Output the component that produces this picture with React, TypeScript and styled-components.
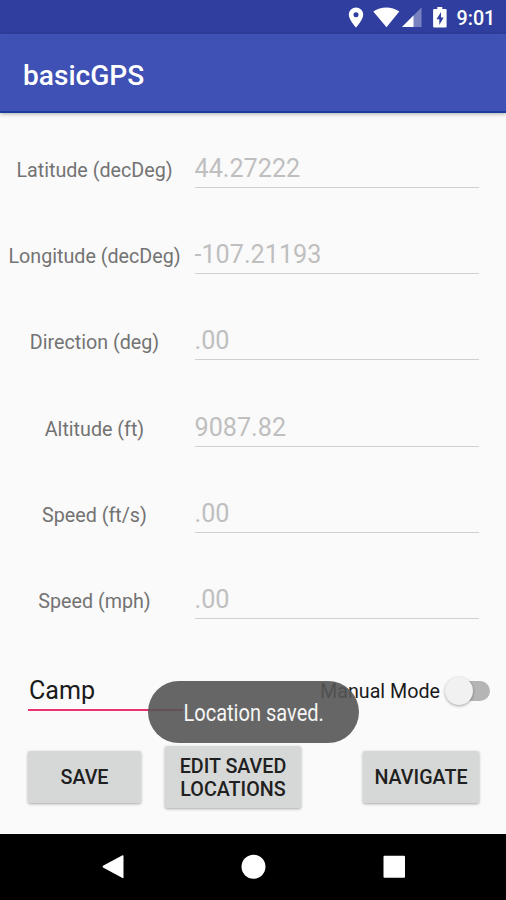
import React from "react";
import styled, { createGlobalStyle } from "styled-components";

const GlobalStyle = createGlobalStyle`
  *, *::before, *::after { box-sizing: border-box; }
  body { margin: 0; background: #fafafa; }
  button, input { font: inherit; border: 0; padding: 0; margin: 0; }
`;

const Screen = styled.div`
  position: relative;
  display: flex;
  flex-direction: column;
  width: 506px;
  height: 900px;
  overflow: hidden;
  background: #fafafa;
  color: #1b1b1b;
  font-family: Roboto, "Liberation Sans", sans-serif;
`;

const StatusBar = styled.header`
  flex: none;
  display: flex;
  justify-content: flex-end;
  height: 34px;
  background: #303f9f;
`;

const StatusIcons = styled.svg`
  display: block;
  width: 110px;
  height: 34px;
`;

const Clock = styled.span`
  width: 50px;
  padding-left: 0.5px;
  font-size: 19.7px;
  font-weight: 500;
  line-height: 37px;
  color: #fff;
  white-space: nowrap;
`;

const AppBar = styled.div`
  flex: none;
  display: flex;
  align-items: center;
  height: 79px;
  padding: 6px 23px 0;
  background: #3f51b5;
  border-bottom: 2px solid #1c3c9c;
  box-shadow: 0 1px 4px rgba(0, 0, 0, 0.32);
`;

const Title = styled.h1`
  margin: 0;
  font-size: 28.1px;
  font-weight: 500;
  line-height: 34px;
  color: #fff;
`;

const Content = styled.main`
  flex: none;
  height: 720.5px;
  padding-top: 29px;
`;

const Readings = styled.section`
  display: flex;
  flex-direction: column;
  gap: 36.2px;
`;

const Row = styled.div`
  display: grid;
  grid-template-columns: 189px 284px;
  column-gap: 5.5px;
  height: 50px;
`;

const Label = styled.span`
  padding-top: 15px;
  font-size: 19.7px;
  line-height: 28px;
  text-align: center;
  color: #737373;
  white-space: nowrap;
`;

const Value = styled.div`
  height: 46px;
  padding-top: 11px;
  border-bottom: 1px solid #d0d0d0;
  font-size: 25.2px;
  line-height: 32px;
  color: #bfbfbf;
`;

const LocationRow = styled.div`
  display: flex;
  justify-content: space-between;
  height: 44px;
  margin-top: 47px;
  padding: 0 16px 0 28px;
`;

const NameField = styled.div`
  width: 155px;
  height: 41px;
  border-bottom: 2px solid #e8336f;
  padding-left: 1px;
  font-size: 25.1px;
  line-height: 41px;
`;

const ModeToggle = styled.div`
  display: flex;
  align-items: center;
  gap: 5px;
  height: 42px;
  font-size: 19.7px;
  white-space: nowrap;
`;

const ModeLabel = styled.span`
  padding-top: 1px;
`;

const Switch = styled.span`
  display: flex;
  align-items: center;
  width: 45px;
  height: 30px;
`;

const SwitchThumb = styled.span`
  flex: none;
  z-index: 1;
  width: 28px;
  height: 28px;
  border-radius: 50%;
  background: #f1f1f1;
  box-shadow: 0 1px 3px rgba(0, 0, 0, 0.35);
`;

const SwitchTrack = styled.span`
  flex: none;
  width: 32px;
  height: 20px;
  margin-left: -15px;
  border-radius: 10px;
  background: #b5b5b5;
`;

const Actions = styled.div`
  display: flex;
  align-items: center;
  margin-top: 32.5px;
  padding: 0 27px 0 28px;
`;

const ActionButton = styled.button<{ $width: number; $height?: number; $left?: string }>`
  width: ${(p) => p.$width}px;
  height: ${(p) => p.$height ?? 52}px;
  margin-left: ${(p) => p.$left ?? "0"};
  padding-top: 1px;
  border-radius: 2px;
  background: #d6d8d7;
  box-shadow: 0 1px 3px rgba(0, 0, 0, 0.34);
  color: #202020;
  font-size: 19.7px;
  font-weight: 500;
  line-height: 23px;
  text-align: center;
  white-space: pre-line;
`;

const Toast = styled.div`
  position: absolute;
  left: 148px;
  top: 681px;
  display: flex;
  align-items: center;
  justify-content: center;
  width: 211px;
  height: 62px;
  padding-top: 2px;
  border-radius: 31px;
  background: rgba(85, 85, 85, 0.9);
  color: #f5f5f5;
  font-size: 23.6px;
  white-space: nowrap;
`;

const ToastText = styled.span`
  transform: scaleX(0.85);
`;

const NavBar = styled.nav`
  flex: none;
  display: flex;
  height: 66.5px;
  background: #000;
`;

const NavIcons = styled.svg`
  display: block;
  width: 506px;
  height: 66px;
`;

const readings = [
  { label: "Latitude (decDeg)", value: "44.27222" },
  { label: "Longitude (decDeg)", value: "-107.21193" },
  { label: "Direction (deg)", value: ".00" },
  { label: "Altitude (ft)", value: "9087.82" },
  { label: "Speed (ft/s)", value: ".00" },
  { label: "Speed (mph)", value: ".00" },
];

export default function App() {
  return (
    <>
      <GlobalStyle />
      <Screen>
        <StatusBar>
          <StatusIcons viewBox="346 0 110 34" fill="#fff">
            <path fillRule="evenodd" d="M356 7.5a7.2 7.2 0 0 0-7.2 7.2c0 5 7.2 12.8 7.2 12.8s7.2-7.8 7.2-12.8A7.2 7.2 0 0 0 356 7.5zm0 4.7a2.5 2.5 0 1 1 0 5 2.5 2.5 0 0 1 0-5z" />
            <path d="M373.3 11.5c8-5.4 18-5.4 26 0L386.5 27.3z" />
            <path d="M421.5 7.5V27H402z" opacity=".35" />
            <path d="M413.5 15.5V27H402z" />
            <path fillRule="evenodd" d="M437.3 7h5v2h3.3q1 0 1 1v16.5q0 1-1 1h-11.5q-1 0-1-1V10q0-1 1-1h3.2zM441 12l-4.5 7.2h2.8V25l4.4-7.5H441z" />
          </StatusIcons>
          <Clock>9:01</Clock>
        </StatusBar>
        <AppBar>
          <Title>basicGPS</Title>
        </AppBar>
        <Content>
          <Readings>
            {readings.map((reading) => (
              <Row key={reading.label}>
                <Label>{reading.label}</Label>
                <Value>{reading.value}</Value>
              </Row>
            ))}
          </Readings>
          <LocationRow>
            <NameField>Camp</NameField>
            <ModeToggle>
              <ModeLabel>Manual Mode</ModeLabel>
              <Switch>
                <SwitchThumb />
                <SwitchTrack />
              </Switch>
            </ModeToggle>
          </LocationRow>
          <Actions>
            <ActionButton $width={113}>SAVE</ActionButton>
            <ActionButton $width={136} $height={62} $left="24px">
              {"EDIT SAVED\nLOCATIONS"}
            </ActionButton>
            <ActionButton $width={116} $left="auto">NAVIGATE</ActionButton>
          </Actions>
        </Content>
        <NavBar>
          <NavIcons viewBox="0 834 506 66" fill="#fff">
            <path d="M103 865.8L122.5 855.3Q123.5 855 123.5 856V877.5Q123.5 878.5 122.5 878L103 867.5Q102 866.7 103 865.8z" />
            <circle cx="253.5" cy="866.7" r="12" />
            <rect x="383.5" y="855.8" width="21.5" height="22" rx="1" />
          </NavIcons>
        </NavBar>
        <Toast>
          <ToastText>Location saved.</ToastText>
        </Toast>
      </Screen>
    </>
  );
}
